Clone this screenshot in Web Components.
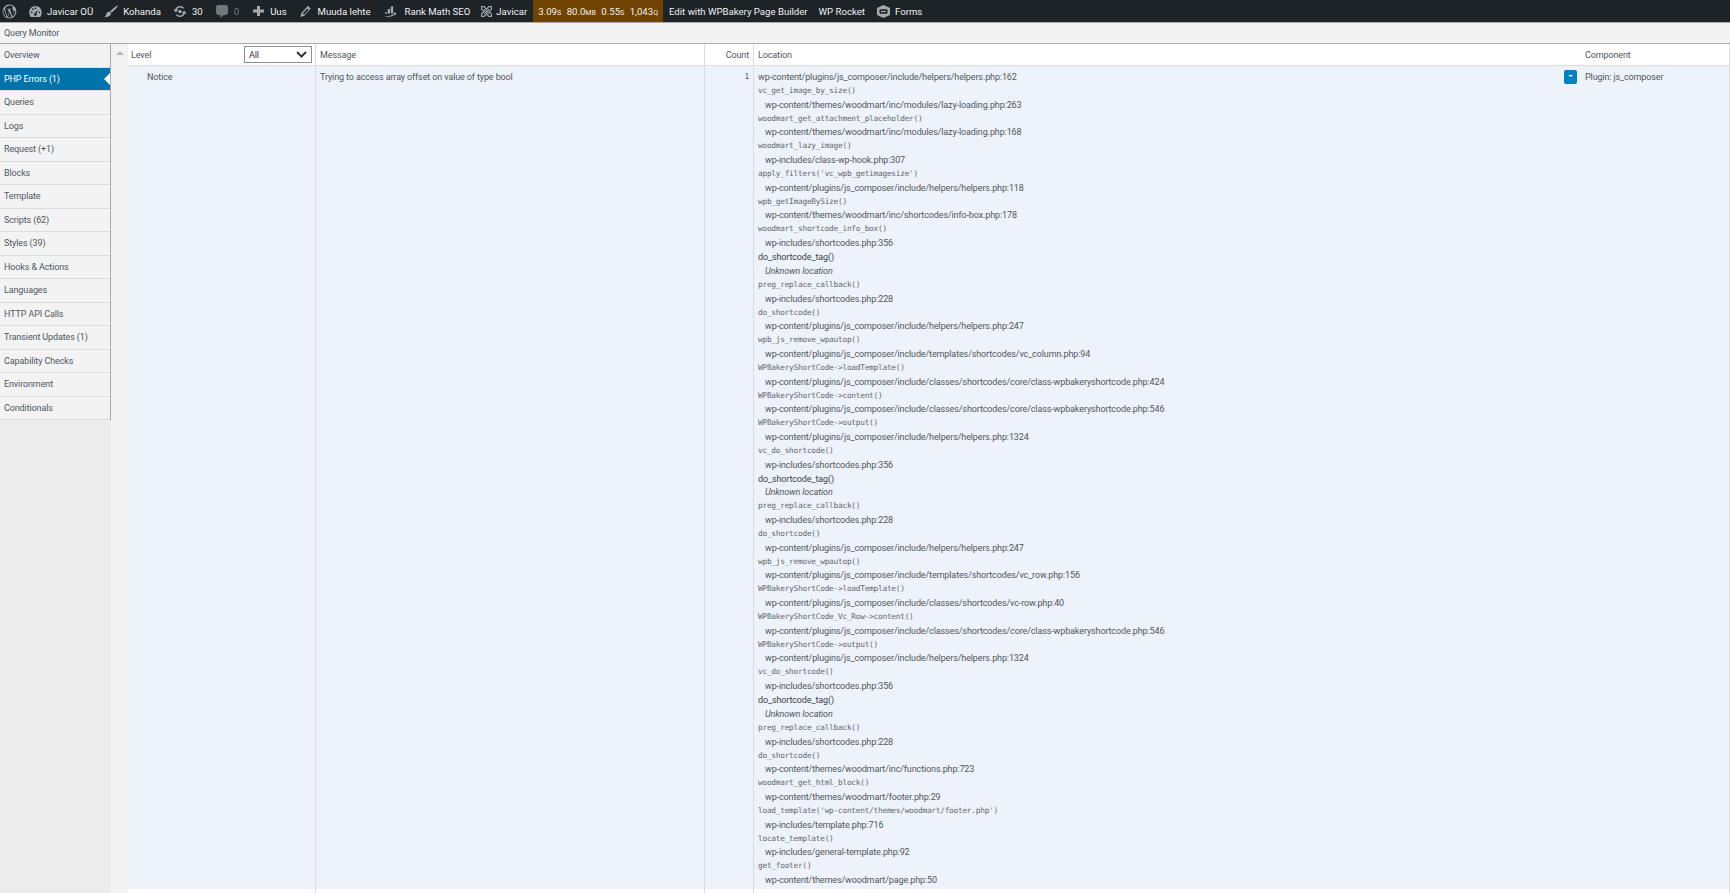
<!DOCTYPE html>
<html lang="et">
<head>
<meta charset="utf-8">
<title>Query Monitor</title>
<style>
    html, body { margin: 0; padding: 0; height: 100%; overflow: hidden; background: #fff; }
    body { font-family: Roboto, "Open Sans", sans-serif; font-size: 9px; letter-spacing: -0.12px; color: #50575e; }
    #page { display: flex; flex-direction: column; height: 893px; }
    #qm-body { flex: 1; display: flex; min-height: 0; }
</style>
</head>
<body>
<div id="page">
    <admin-bar></admin-bar>
    <qm-title>Query Monitor</qm-title>
    <div id="qm-body">
        <qm-nav></qm-nav>
        <qm-gutter></qm-gutter>
        <qm-errors></qm-errors>
    </div>
</div>

<script>
    const ICONS = {
        wp: '<svg width="15" height="15" viewBox="0 0 20 20"><path fill="#a7aaad" fill-rule="evenodd" d="M10 .8a9.200 9.200 0 1 0 0 18.400A9.200 9.200 0 0 0 10 .8zm0 1.200c2 0 3.900.8 5.300 2-.8 0-1.500.7-1.500 1.600 0 .8.500 1.500 1 2.300.4.700.8 1.500.8 2.700 0 .8-.3 1.800-.7 3.100l-1 3.100-3.200-9.700c.6 0 1-.1 1-.1.500-.1.500-.8 0-.8 0 0-1.500.1-2.400.1-.9 0-2.400-.1-2.400-.1-.5 0-.5.800 0 .8 0 0 .5.100 1 .1l1.400 3.900-2 6-3.300-9.900c.6 0 1-.1 1-.1.500-.1.500-.8 0-.8 0 0-1.400.1-2.400.1H3.400A8 8 0 0 1 10 2zM2.600 6.800l3.800 10.400A8 8 0 0 1 2.600 6.800zm14.200-.1A8 8 0 0 1 14 17l2.400-7c.5-1.100.6-2 .6-2.800 0-.2-.1-.4-.2-.5zM10.200 10.800l2.500 6.700a8 8 0 0 1-4.900.1z"/></svg>',
        gauge: '<svg width="13" height="11" viewBox="0 0 17 15"><path fill="#a7aaad" fill-rule="evenodd" d="M8.500 0C3.800 0 0 3.800 0 8.500c0 2.400.8 4.600 2 6.500h13c1.300-1.900 2-4.100 2-6.500C17 3.800 13.200 0 8.500 0zM3.400 9.800a1.200 1.200 0 1 1 0-2.400 1.200 1.200 0 0 1 0 2.400zM5 5.500a1.200 1.200 0 1 1 0-2.400 1.200 1.200 0 0 1 0 2.400zm3.500-1.400a1.200 1.200 0 1 1 0-2.400 1.200 1.200 0 0 1 0 2.400zm0 9.400a2 2 0 0 1-.6-3.900l3.700-4.900-1.700 5.800a2 2 0 0 1-1.400 3zm5-3.700a1.200 1.200 0 1 1 0-2.400 1.200 1.200 0 0 1 0 2.400z"/></svg>',
        brush: '<svg width="14" height="13" viewBox="0 0 17 15"><path fill="#a7aaad" d="M16.800.2c.3.3-.4 1.500-1.800 3.100-1.400 1.700-3.800 4.100-5.500 5.600L7.400 7C9.100 5.600 11.600 3.300 13.400 2 15.100.7 16.400-.1 16.800.2zM6.700 7.600l2.100 1.900c-.2 1.400-.9 2.500-1.900 3.300C5.500 13.900 2.300 14.700.3 14.300c1-.6 1.900-1.600 2.200-3 .4-2 2.200-3.400 4.200-3.700z"/></svg>',
        update: '<svg width="14" height="11" viewBox="0 0 17 14"><path fill="#a7aaad" fill-rule="evenodd" d="M8.700 0C5.700 0 3.200 1.900 2.300 4.600H0l3.200 3.800 3.200-3.800H4.300c.8-1.700 2.500-2.800 4.400-2.800 1.500 0 2.900.7 3.800 1.800l1.500-1.100C12.700.9 10.800 0 8.700 0zM13.800 5.600l-3.200 3.800h2.100c-.8 1.700-2.500 2.800-4.400 2.800-1.500 0-2.900-.7-3.800-1.800L3 11.500C4.300 13.100 6.200 14 8.300 14c3 0 5.500-1.900 6.400-4.600H17z"/><circle cx="8.500" cy="7" r="2.200" fill="#a7aaad"/></svg>',
        comment: '<svg width="12" height="13" viewBox="0 0 14 15"><path fill="#72777c" d="M2.500 0h9A2.500 2.500 0 0 1 14 2.500v6.500a2.500 2.500 0 0 1-2.500 2.500H9L5 15v-3.500H2.500A2.500 2.500 0 0 1 0 9V2.500A2.500 2.500 0 0 1 2.500 0z"/></svg>',
        plus: '<svg width="11" height="10" viewBox="0 0 11 10"><path fill="#a7aaad" d="M4 0h3v3.500h4v3H7V10H4V6.500H0v-3h4z"/></svg>',
        edit: '<svg width="11" height="11" viewBox="0 0 13 14"><path fill="#a7aaad" fill-rule="evenodd" d="M10 .3l2.700 2.500a.7.700 0 0 1 0 1L5 12.300 0 14l1.300-5L9 .3a.7.700 0 0 1 1 0zM3 9.500l1.700 1.600 5.800-6.400-1.700-1.600z"/></svg>',
        rank: '<svg width="14" height="11" viewBox="0 0 16 14"><path fill="#a7aaad" d="M9 1l3-1v9.500H9zM5 4.500l3-1v6H5zM1.500 8.500l2.500-1v2.500H1.500zM0 12.500c4.500 1 10-.3 13.500-3L12.800 8l3.200.5-.6 3.400-1-1.200C10.500 13.800 4.500 14.800 0 12.500z"/></svg>',
        x: '<svg width="11" height="11" viewBox="0 0 15 15"><g fill="none" stroke="#a7aaad" stroke-width="1.500"><path d="M.8.800h3.500l3.200 3.500L10.700.8h3.500v3.500l-3.500 3.200 3.500 3.200v3.500h-3.500l-3.200-3.500-3.200 3.500H.8v-3.500l3.500-3.200L.8 4.300z"/><path d="M4.300 4.300l6.400 6.400M10.700 4.300l-6.400 6.400"/></g></svg>',
        forms: '<svg width="13" height="13" viewBox="0 0 13 15" preserveAspectRatio="none"><path fill="#a7aaad" d="M6.500 0L13 3.600v7.800L6.500 15 0 11.400V3.600z"/><rect x="2.500" y="5" width="8" height="5" rx="1" fill="#1d2327"/><rect x="4" y="6.800" width="5" height="1.400" fill="#a7aaad"/></svg>'
    };

    const FRAMES = [
        ["vc_get_image_by_size()", "wp-content/themes/woodmart/inc/modules/lazy-loading.php:263"],
        ["woodmart_get_attachment_placeholder()", "wp-content/themes/woodmart/inc/modules/lazy-loading.php:168"],
        ["woodmart_lazy_image()", "wp-includes/class-wp-hook.php:307"],
        ["apply_filters('vc_wpb_getimagesize')", "wp-content/plugins/js_composer/include/helpers/helpers.php:118"],
        ["wpb_getImageBySize()", "wp-content/themes/woodmart/inc/shortcodes/info-box.php:178"],
        ["woodmart_shortcode_info_box()", "wp-includes/shortcodes.php:356"],
        ["do_shortcode_tag()", null],
        ["preg_replace_callback()", "wp-includes/shortcodes.php:228"],
        ["do_shortcode()", "wp-content/plugins/js_composer/include/helpers/helpers.php:247"],
        ["wpb_js_remove_wpautop()", "wp-content/plugins/js_composer/include/templates/shortcodes/vc_column.php:94"],
        ["WPBakeryShortCode->loadTemplate()", "wp-content/plugins/js_composer/include/classes/shortcodes/core/class-wpbakeryshortcode.php:424"],
        ["WPBakeryShortCode->content()", "wp-content/plugins/js_composer/include/classes/shortcodes/core/class-wpbakeryshortcode.php:546"],
        ["WPBakeryShortCode->output()", "wp-content/plugins/js_composer/include/helpers/helpers.php:1324"],
        ["vc_do_shortcode()", "wp-includes/shortcodes.php:356"],
        ["do_shortcode_tag()", null],
        ["preg_replace_callback()", "wp-includes/shortcodes.php:228"],
        ["do_shortcode()", "wp-content/plugins/js_composer/include/helpers/helpers.php:247"],
        ["wpb_js_remove_wpautop()", "wp-content/plugins/js_composer/include/templates/shortcodes/vc_row.php:156"],
        ["WPBakeryShortCode->loadTemplate()", "wp-content/plugins/js_composer/include/classes/shortcodes/vc-row.php:40"],
        ["WPBakeryShortCode_Vc_Row->content()", "wp-content/plugins/js_composer/include/classes/shortcodes/core/class-wpbakeryshortcode.php:546"],
        ["WPBakeryShortCode->output()", "wp-content/plugins/js_composer/include/helpers/helpers.php:1324"],
        ["vc_do_shortcode()", "wp-includes/shortcodes.php:356"],
        ["do_shortcode_tag()", null],
        ["preg_replace_callback()", "wp-includes/shortcodes.php:228"],
        ["do_shortcode()", "wp-content/themes/woodmart/inc/functions.php:723"],
        ["woodmart_get_html_block()", "wp-content/themes/woodmart/footer.php:29"],
        ["load_template('wp-content/themes/woodmart/footer.php')", "wp-includes/template.php:716"],
        ["locate_template()", "wp-includes/general-template.php:92"],
        ["get_footer()", "wp-content/themes/woodmart/page.php:50"]
    ];

    const NAV_ITEMS = ["Overview", "PHP Errors (1)", "Queries", "Logs", "Request (+1)", "Blocks", "Template", "Scripts (62)", "Styles (39)", "Hooks & Actions", "Languages", "HTTP API Calls", "Transient Updates (1)", "Capability Checks", "Environment", "Conditionals"];

    const esc = s => s.replace(/&/g, '&amp;').replace(/</g, '&lt;').replace(/>/g, '&gt;');

    class AdminBar extends HTMLElement {
        connectedCallback() {
            const root = this.attachShadow({ mode: "open" });
            root.innerHTML = `
            <style>
                :host {
                    display: flex;
                    align-items: stretch;
                    height: 23px;
                    box-sizing: border-box;
                    background: #1d2327;
                    color: #f0f0f1;
                    font-size: 9.6px;
                    letter-spacing: 0;
                    white-space: nowrap;
                    border-bottom: 1px solid #a7aaad;
                }
                .item { display: flex; align-items: center; gap: var(--gap, 5px); margin-left: var(--ml, 12px); }
                .item svg { display: block; flex: none; }
                .muted { color: #787c82; }
                .qm { background: #704400; gap: 5.5px; padding: 0 5px; margin-left: 6px; }
                .qm small { font-size: 7px; }
            </style>
            <div class="item" style="--ml:2px">${ICONS.wp}</div>
            <div class="item">${ICONS.gauge}Javicar OÜ</div>
            <div class="item" style="--ml:11px">${ICONS.brush}Kohanda</div>
            <div class="item">${ICONS.update}30</div>
            <div class="item" style="--ml:13px;--gap:6px">${ICONS.comment}<span class="muted">0</span></div>
            <div class="item" style="--ml:14px;--gap:6px">${ICONS.plus}Uus</div>
            <div class="item" style="--ml:13px;--gap:7px">${ICONS.edit}Muuda lehte</div>
            <div class="item" style="--gap:8px">${ICONS.rank}Rank Math SEO</div>
            <div class="item" style="--ml:11px;--gap:4px">${ICONS.x}Javicar</div>
            <div class="item qm"><span>3.09<small>S</small></span><span>80.0<small>MB</small></span><span>0.55<small>S</small></span><span>1,043<small>Q</small></span></div>
            <div class="item" style="--ml:6px">Edit with WPBakery Page Builder</div>
            <div class="item" style="--ml:11px">WP Rocket</div>
            <div class="item">${ICONS.forms}Forms</div>`;
        }
    }

    class QmTitle extends HTMLElement {
        connectedCallback() {
            const root = this.attachShadow({ mode: "open" });
            root.innerHTML = `
            <style>
                :host {
                    display: flex;
                    align-items: center;
                    box-sizing: border-box;
                    height: 21px;
                    padding: 0 4px;
                    background: #f3f3f3;
                    border-bottom: 1px solid #a7aaad;
                    color: #50575e;
                }
            </style>
            <slot></slot>`;
        }
    }

    class QmNav extends HTMLElement {
        connectedCallback() {
            const root = this.attachShadow({ mode: "open" });
            const items = NAV_ITEMS.map(name =>
                `<li class="${name.startsWith('PHP') ? 'active' : ''}">${esc(name)}</li>`).join('');
            root.innerHTML = `
            <style>
                :host {
                    display: block;
                    flex: none;
                    width: 111px;
                    background: #ececec;
                }
                ul {
                    list-style: none;
                    margin: 0;
                    padding: 0;
                    box-sizing: border-box;
                    border-right: 1px solid #a7aaad;
                    background: #f3f3f3;
                }
                li {
                    position: relative;
                    box-sizing: border-box;
                    height: 23.5px;
                    line-height: 22px;
                    padding-left: 4px;
                    border-bottom: 1px solid #dcdcde;
                    color: #50575e;
                    white-space: nowrap;
                }
                li.active { background: #0073aa; color: #fff; }
                li.active::after {
                    content: "";
                    position: absolute;
                    right: 0;
                    top: 5px;
                    border: 6px solid transparent;
                    border-right-color: #fff;
                    border-left-width: 0;
                }
            </style>
            <ul>${items}</ul>`;
        }
    }

    class QmGutter extends HTMLElement {
        connectedCallback() {
            const root = this.attachShadow({ mode: "open" });
            root.innerHTML = `
            <style>
                :host { display: block; flex: none; width: 17px; background: #f3f3f3; }
                i {
                    display: block;
                    width: 0;
                    margin: 7px 0 0 5px;
                    border: 4px solid transparent;
                    border-top-width: 0;
                    border-bottom: 4px solid #b4b9be;
                }
            </style>
            <i></i>`;
        }
    }

    class QmFrame extends HTMLElement {
        set data(d) {
            const root = this.attachShadow({ mode: "open" });
            const [fn, file] = d;
            root.innerHTML = `
            <style>
                :host { display: block; }
                .fn {
                    height: 14.7px;
                    line-height: 14px;
                    font-family: "DejaVu Sans Mono", monospace;
                    font-size: 7.8px;
                    letter-spacing: -0.25px;
                    color: #646970;
                }
                .fn.plain { font-family: inherit; font-size: 9px; letter-spacing: -0.12px; color: #3c434a; }
                .file { height: 13px; line-height: 13.7px; padding-left: 7px; }
                .file.unknown { font-style: italic; }
            </style>
            <div class="fn ${file ? '' : 'plain'}">${esc(fn)}</div>
            <div class="file ${file ? '' : 'unknown'}">${file ? esc(file) : 'Unknown location'}</div>`;
        }
    }

    class QmErrors extends HTMLElement {
        connectedCallback() {
            const root = this.attachShadow({ mode: "open" });
            root.innerHTML = `
            <style>
                :host {
                    display: grid;
                    flex: 1;
                    min-width: 0;
                    grid-template-columns: 188px 389px 49px 827px 1fr;
                    grid-template-rows: 22px 823px 1fr;
                    background: #fff;
                }
                .c { box-sizing: border-box; border-right: 1px solid #dcdcde; padding: 0 4px; min-width: 0; }
                .c:nth-child(5n) { border-right: 0; }
                .th { border-bottom: 1px solid #dcdcde; display: flex; align-items: center; }
                .td { background: #eef2fa; padding-top: 4px; position: relative; line-height: 14px; }
                .level { justify-content: space-between; padding-left: 3px; padding-right: 3px; }
                .box {
                    box-sizing: border-box;
                    width: 68px;
                    height: 17px;
                    border: 1px solid #8c8f94;
                    padding: 0 4px;
                    display: flex;
                    align-items: center;
                    justify-content: space-between;
                    background: #fff;
                    color: #32373c;
                }
                .num { text-align: right; font-family: "DejaVu Sans Mono", monospace; font-size: 7.8px; }
                .toggle {
                    position: absolute;
                    right: 4px;
                    top: 4px;
                    width: 13px;
                    height: 14px;
                    border-radius: 2px;
                    background: #0081c2;
                    color: #fff;
                    line-height: 13px;
                    text-align: center;
                    font-size: 12px;
                    font-weight: 700;
                }
                .first { height: 14px; }
            </style>
            <div class="c th level">Level
                <div class="box">All<svg width="11" height="7" viewBox="0 0 11 7"><path fill="none" stroke="#32373c" stroke-width="2" d="M1 1l4.500 4.500L10 1"/></svg></div>
            </div>
            <div class="c th">Message</div>
            <div class="c th" style="justify-content:flex-end">Count</div>
            <div class="c th">Location</div>
            <div class="c th">Component</div>

            <div class="c td" style="padding-left:19px">Notice</div>
            <div class="c td">Trying to access array offset on value of type bool</div>
            <div class="c td num">1</div>
            <div class="c td" id="loc">
                <div class="first">wp-content/plugins/js_composer/include/helpers/helpers.php:162</div>
                <span class="toggle">-</span>
            </div>
            <div class="c td">Plugin: js_composer</div>

            <div class="c"></div><div class="c"></div><div class="c"></div><div class="c"></div><div class="c"></div>`;
            const loc = root.getElementById('loc');
            FRAMES.forEach(f => {
                const el = document.createElement('qm-frame');
                loc.appendChild(el);
                el.data = f;
            });
        }
    }

    customElements.define('qm-frame', QmFrame);
    customElements.define('admin-bar', AdminBar);
    customElements.define('qm-title', QmTitle);
    customElements.define('qm-nav', QmNav);
    customElements.define('qm-gutter', QmGutter);
    customElements.define('qm-errors', QmErrors);
</script>
</body>
</html>
